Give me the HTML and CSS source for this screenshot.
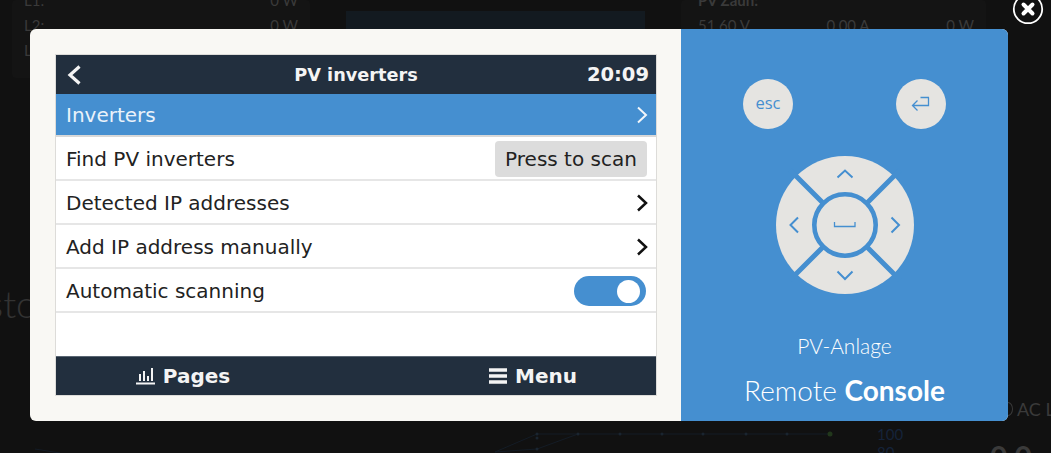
FILE: index.html
```html
<!DOCTYPE html>
<html>
<head>
  <meta charset="utf-8">
  <title>Remote Console</title>
  <link rel="stylesheet" href="styles.css">
</head>
<body>
<div class="dash">
  <div class="dash-top">
    <div class="dash-card">
      <div class="dash-line dash-cut"><span>L1:</span><span>0 W</span></div>
      <div class="dash-line"><span>L2:</span><span>0 W</span></div>
      <div class="dash-line"><span>L3:</span><span>0 W</span></div>
    </div>
    <div class="dash-chart"></div>
    <div class="dash-card dash-card-pv">
      <div class="dash-line dash-cut dash-bold"><span>PV Zaun:</span></div>
      <div class="dash-line"><span>51.60 V</span><span>0.00 A</span><span>0 W</span></div>
    </div>
  </div>
  <div class="dash-mid">
    <span class="dash-big">sto</span>
  </div>
  <div class="dash-low">
    <svg class="dash-graph" width="877" height="55" viewBox="0 0 877 55">
      <path d="M35 51 L60 55 M495 54 L537 36 L578 36 H830 M495 54 L537 51 L578 36" fill="none" stroke="#141c26" stroke-width="1"/>
      <g fill="#1a2530">
        <circle cx="537" cy="36" r="1.500"/>
        <circle cx="537" cy="40" r="1.500"/>
        <circle cx="537" cy="51" r="1.500"/>
        <circle cx="578" cy="36" r="1.500"/>
        <circle cx="620" cy="36" r="1.500"/>
        <circle cx="662" cy="36" r="1.500"/>
        <circle cx="703" cy="36" r="1.500"/>
        <circle cx="746" cy="36" r="1.500"/>
        <circle cx="787" cy="36" r="1.500"/>
      </g>
      <circle cx="830" cy="36" r="2.500" fill="#22381c"/>
    </svg>
    <div class="dash-scale"><span>100</span><span>80</span></div>
    <div class="dash-ac">
      <span class="dash-ac-label"><i class="dash-ring"></i>AC L</span>
      <b>0.0</b>
    </div>
  </div>
</div>

<button class="closebtn" aria-label="Close">
  <svg width="34" height="34" viewBox="0 0 34 34">
    <circle cx="16" cy="9" r="14.2" fill="none" stroke="#fff" stroke-width="1.8"/>
    <path d="M11.5 4.5 L20.5 13.5 M20.5 4.5 L11.5 13.5" stroke="#fff" stroke-width="4" stroke-linecap="round"/>
  </svg>
</button>

<div class="modal">
  <div class="screenpane">
    <div class="screen">
      <div class="topbar">
        <svg class="back" width="16" height="20" viewBox="0 0 16 20"><path d="M12.500 1.500 L3 10 L12.500 18.500" fill="none" stroke="#f4f4f4" stroke-width="3.200"/></svg>
        <span class="topbar-title">PV inverters</span>
        <span class="topbar-time">20:09</span>
      </div>
      <div class="row row-active">
        <span>Inverters</span>
        <svg class="chev" width="12" height="18" viewBox="0 0 12 18"><path d="M2 1.500 L10 9 L2 16.500" fill="none" stroke="#f2f6fa" stroke-width="2"/></svg>
      </div>
      <div class="row">
        <span>Find PV inverters</span>
        <span class="scanbtn">Press to scan</span>
      </div>
      <div class="row">
        <span>Detected IP addresses</span>
        <svg class="chev" width="12" height="18" viewBox="0 0 12 18"><path d="M2 1.500 L10 9 L2 16.500" fill="none" stroke="#111" stroke-width="2.500"/></svg>
      </div>
      <div class="row">
        <span>Add IP address manually</span>
        <svg class="chev" width="12" height="18" viewBox="0 0 12 18"><path d="M2 1.500 L10 9 L2 16.500" fill="none" stroke="#111" stroke-width="2.500"/></svg>
      </div>
      <div class="row">
        <span>Automatic scanning</span>
        <span class="toggle"><span class="toggle-knob"></span></span>
      </div>
      <div class="row row-empty"></div>
      <div class="bottombar">
        <span class="tab">
          <svg width="19" height="17" viewBox="0 0 19 17"><path d="M0 15.500 H19 M4 13 V6 M8 13 V3 M12 13 V8 M16 13 V0" fill="none" stroke="#f4f4f4" stroke-width="2"/></svg>
          Pages
        </span>
        <span class="tab">
          <svg width="18" height="16" viewBox="0 0 18 16"><path d="M0 2 H18 M0 8 H18 M0 14 H18" fill="none" stroke="#f4f4f4" stroke-width="3.600"/></svg>
          Menu
        </span>
      </div>
    </div>
  </div>
  <div class="keypane">
    <div class="keys-top">
      <span class="roundkey roundkey-esc">esc</span>
      <span class="roundkey">
        <svg width="20" height="16" viewBox="0 0 20 16"><path d="M17.500 1.500 V9.500 H1.500 M6.500 4.500 L1.500 9.500 L6.500 14.500 M18 1.500 H9.500" fill="none" stroke="#458fd0" stroke-width="1.300"/></svg>
      </span>
    </div>
    <svg class="dpad" width="138" height="138" viewBox="0 0 138 138">
      <circle cx="69" cy="69" r="69" fill="#e5e4e1"/>
      <path d="M14 14 L124 124 M124 14 L14 124" stroke="#458fd0" stroke-width="5"/>
      <circle cx="69" cy="69" r="30.700" fill="#e5e4e1" stroke="#458fd0" stroke-width="4.600"/>
      <path d="M61.500 21.500 L69 14.500 L76.500 21.500 M61.500 115.500 L69 123 L76.500 115.500 M22 61.500 L14.500 69 L22 76.500 M115.500 61.500 L123 69 L115.500 76.500" fill="none" stroke="#458fd0" stroke-width="2"/>
      <path d="M58.500 66 V70.500 H79 V66" fill="none" stroke="#458fd0" stroke-width="1.300"/>
    </svg>
    <div class="sitename">PV-Anlage</div>
    <div class="brand">Remote <b>Console</b></div>
  </div>
</div>
</body>
</html>
```

FILE: styles.css
```css
html, body {
  margin: 0;
  height: 100%;
}

body {
  position: relative;
  width: 1051px;
  height: 453px;
  overflow: hidden;
  background-color: #111111;
  font-family: "Lato", "Open Sans", sans-serif;
}

/* dimmed page behind the overlay */
.dash {
  display: flex;
  flex-direction: column;
  color: #3a3a3a;
}

.dash-top {
  display: flex;
  gap: 36px;
  height: 78px;
  padding-left: 12px;
}

.dash-card {
  display: flex;
  flex-direction: column;
  width: 298px;
  box-sizing: border-box;
  padding: 0 12px;
  background-color: #141414;
  border-radius: 4px;
  font-size: 15px;
  line-height: 25px;
}

.dash-card-pv {
  padding-left: 17px;
  width: 305px;
}

.dash-line {
  display: flex;
  justify-content: space-between;
}

.dash-cut {
  margin-top: -12px;
}

.dash-bold {
  font-weight: bold;
}

.dash-chart {
  width: 299px;
  height: 29px;
  background: linear-gradient(#111111 11px, #131a20 11px);
}

.dash-mid {
  margin-top: 202px;
  height: 50px;
}

.dash-big {
  display: block;
  margin-left: -13px;
  font-size: 38px;
  font-weight: 300;
  color: #333333;
}

.dash-low {
  display: flex;
  align-items: flex-start;
  width: 1100px;
  margin-top: 68px;
  white-space: nowrap;
}

.dash-graph {
  display: block;
  flex: none;
}

.dash-scale {
  display: flex;
  flex-direction: column;
  width: 113px;
  margin-top: 27px;
  color: #15233a;
  font-size: 15px;
  line-height: 18px;
}

.dash-ac {
  display: flex;
  flex-direction: column;
  font-size: 18px;
}

.dash-ac-label {
  display: flex;
  align-items: center;
  gap: 4px;
  padding-left: 13px;
}

.dash-ring {
  width: 10px;
  height: 14px;
  box-sizing: border-box;
  border: 1px solid #3a3a3a;
  border-radius: 50%;
}

.dash-ac b {
  margin-top: 18px;
  font-size: 30px;
}

/* overlay */
.modal {
  position: absolute;
  left: 30px;
  top: 29px;
  display: flex;
  width: 978px;
  height: 392px;
  overflow: hidden;
  border-radius: 6px;
  background-color: #f9f8f4;
}

.closebtn {
  position: absolute;
  left: 1012px;
  top: 0;
  width: 34px;
  height: 34px;
  padding: 0;
  border: 0;
  background: none;
}

.closebtn svg {
  display: block;
}

.screenpane {
  width: 651px;
  box-sizing: border-box;
  padding: 25px 0 0 25px;
}

.screen {
  display: flex;
  flex-direction: column;
  width: 600px;
  height: 340px;
  border: 1px solid #dddcd9;
  background-color: #ffffff;
  font-family: "DejaVu Sans", sans-serif;
  font-size: 20px;
  color: #222222;
}

.topbar, .bottombar {
  background-color: #222f3e;
  color: #f4f4f4;
  font-weight: bold;
}

.topbar {
  position: relative;
  display: flex;
  justify-content: space-between;
  align-items: center;
  height: 39px;
  box-sizing: border-box;
  padding: 0 7px 0 11px;
}

.topbar-title {
  position: absolute;
  left: 0;
  right: 0;
  text-align: center;
  font-size: 17.700px;
}

.topbar-time {
  font-size: 19.500px;
}

.back {
  display: block;
}

.row {
  display: flex;
  justify-content: space-between;
  align-items: center;
  height: 44px;
  box-sizing: border-box;
  padding: 2px 8px 0 10px;
  border-bottom: 2px solid #e6e6e6;
}

.row-active {
  height: 43px;
  padding-top: 0;
  background-color: #458fd0;
  border-bottom-color: #d8d8d8;
  color: #eaf2fa;
}

.row-empty {
  flex: 1;
  border-bottom: 0;
}

.chev {
  display: block;
}

.scanbtn {
  width: 152px;
  height: 36px;
  margin-right: 1px;
  border-radius: 4px;
  background-color: #dcdcdc;
  line-height: 36px;
  text-align: center;
}

.toggle {
  display: flex;
  justify-content: flex-end;
  align-items: center;
  width: 72px;
  height: 30px;
  box-sizing: border-box;
  margin-right: 2px;
  padding-right: 6px;
  border-radius: 15px;
  background-color: #458fd0;
}

.toggle-knob {
  width: 23px;
  height: 23px;
  border-radius: 50%;
  background-color: #ffffff;
}

.bottombar {
  display: grid;
  grid-template-columns: 254px 246px;
  column-gap: 100px;
  height: 39px;
  border-top: 1px solid #5a6673;
  box-sizing: border-box;
}

.tab {
  display: flex;
  justify-content: center;
  align-items: center;
  gap: 8px;
}

.keypane {
  display: flex;
  flex-direction: column;
  align-items: center;
  width: 327px;
  background-color: #458fd0;
  color: #ffffff;
}

.keys-top {
  display: flex;
  justify-content: space-between;
  width: 203px;
  margin-top: 50px;
}

.roundkey {
  display: flex;
  justify-content: center;
  align-items: center;
  width: 50px;
  height: 50px;
  box-sizing: border-box;
  border-radius: 50%;
  background-color: #e5e4e1;
  color: #458fd0;
  font-family: "Open Sans", sans-serif;
  font-size: 16.500px;
}

.roundkey-esc {
  padding-bottom: 3px;
}

.dpad {
  display: block;
  margin-top: 27px;
}

.sitename {
  margin-top: 39px;
  font-size: 21px;
  font-weight: 300;
}

.brand {
  margin-top: 15px;
  font-size: 28px;
  font-weight: 300;
}

.brand b {
  font-weight: 700;
}
```
